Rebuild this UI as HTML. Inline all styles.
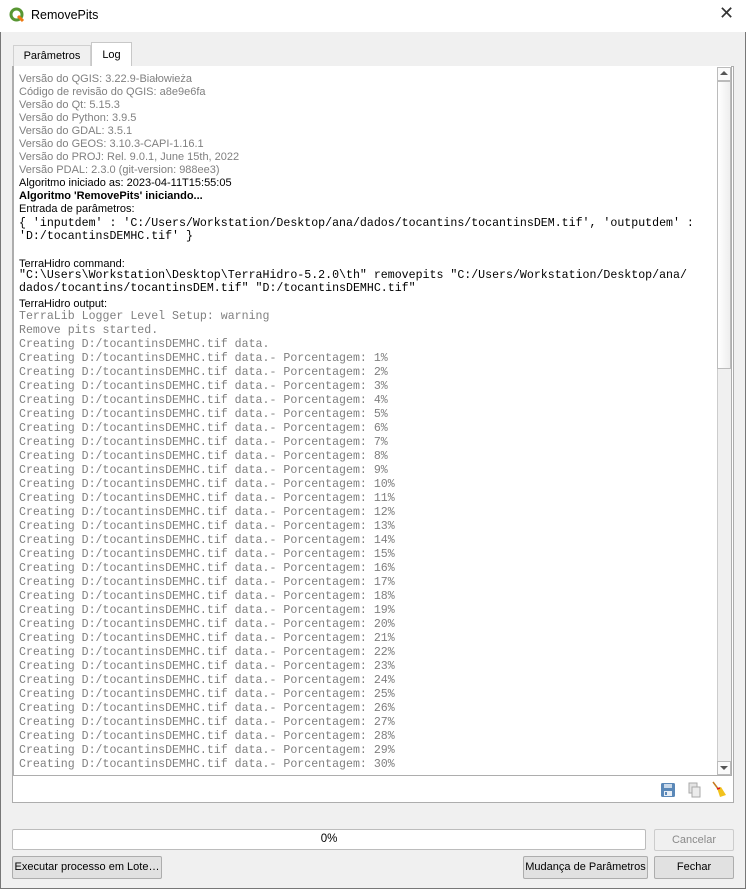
<!DOCTYPE html>
<html style="width:746px;height:889px;overflow:hidden"><head><meta charset="utf-8"><style>
*{margin:0;padding:0;box-sizing:border-box}
body{width:746px;height:889px;background:#f0f0f0;position:relative;overflow:hidden;font-family:"Liberation Sans",sans-serif;font-size:11px;color:#000}
.a{position:absolute}
.l{position:absolute;left:19px;height:14px;line-height:14px;white-space:pre}
.g{color:#808080}
.m{font-family:"Liberation Mono",monospace;font-size:11.6px}
.mg{font-family:"Liberation Mono",monospace;font-size:11.6px;color:#808080}
.btn{position:absolute;border:1px solid #adadad;background:#e1e1e1;border-radius:2px;text-align:center;line-height:21px;font-size:11px;white-space:nowrap;overflow:hidden}
</style></head><body>
<div class="a" style="left:0;top:0;width:746px;height:32px;background:#fff"></div>
<svg class="a" style="left:9px;top:7px" width="16" height="16" viewBox="0 0 16 16"><circle cx="7.5" cy="7.5" r="5.5" fill="none" stroke="#589632" stroke-width="3"/><path d="M9 9 L14 14" stroke="#ee7913" stroke-width="3"/></svg>
<div class="a" style="left:31px;top:8px;font-size:12.5px">RemovePits</div>
<div class="a" style="left:719px;top:3px;font-size:18px;color:#333">✕</div>
<div class="a" style="left:0;top:32px;width:1px;height:857px;background:#777"></div>
<div class="a" style="left:745px;top:32px;width:1px;height:857px;background:#777"></div>
<div class="a" style="left:0;top:888px;width:746px;height:1px;background:#777"></div>
<!-- tabs -->
<div class="a" style="left:13px;top:45px;width:78px;height:21px;border:1px solid #d0d0d0;border-bottom:none;background:#f0f0f0;text-align:center;line-height:21px">Parâmetros</div>
<div class="a" style="left:91px;top:42px;width:41px;height:25px;border:1px solid #c8c8c8;border-bottom:none;background:#fff;text-align:center;line-height:25px">Log</div>
<div class="a" style="left:12px;top:66px;width:722px;height:737px;border:1px solid #adadad;background:#fff"></div>
<div class="a" style="left:13px;top:66px;width:719px;height:710px;border:1px solid #adadad;border-top:none;background:#fff"></div>
<!-- scrollbar -->
<div class="a" style="left:717px;top:67px;width:14px;height:708px;background:#f0f0f0;border-left:1px solid #ccc"></div>
<div class="a" style="left:717px;top:67px;width:14px;height:14px;border:1px solid #bbb;background:#fafafa"></div>
<div class="a" style="left:720px;top:71px;width:0;height:0;border-left:4px solid transparent;border-right:4px solid transparent;border-bottom:4px solid #555"></div>
<div class="a" style="left:717px;top:81px;width:14px;height:288px;border:1px solid #bbb;background:linear-gradient(90deg,#fff,#eee)"></div>
<div class="a" style="left:717px;top:761px;width:14px;height:14px;border:1px solid #bbb;background:#fafafa"></div>
<div class="a" style="left:720px;top:766px;width:0;height:0;border-left:4px solid transparent;border-right:4px solid transparent;border-top:4px solid #555"></div>
<!-- log -->
<div class="l g" style="top:72px">Versão do QGIS: 3.22.9-Białowieża</div>
<div class="l g" style="top:85px">Código de revisão do QGIS: a8e9e6fa</div>
<div class="l g" style="top:98px">Versão do Qt: 5.15.3</div>
<div class="l g" style="top:111px">Versão do Python: 3.9.5</div>
<div class="l g" style="top:124px">Versão do GDAL: 3.5.1</div>
<div class="l g" style="top:137px">Versão do GEOS: 3.10.3-CAPI-1.16.1</div>
<div class="l g" style="top:150px">Versão do PROJ: Rel. 9.0.1, June 15th, 2022</div>
<div class="l g" style="top:163px">Versão PDAL: 2.3.0 (git-version: 988ee3)</div>
<div class="l" style="top:176px">Algoritmo iniciado as: 2023-04-11T15:55:05</div>
<div class="l" style="top:189px;font-weight:bold">Algoritmo 'RemovePits' iniciando...</div>
<div class="l" style="top:202px">Entrada de parâmetros:</div>
<div class="l m" style="top:217px">{ 'inputdem' : 'C:/Users/Workstation/Desktop/ana/dados/tocantins/tocantinsDEM.tif', 'outputdem' :</div>
<div class="l m" style="top:230px">'D:/tocantinsDEMHC.tif' }</div>
<div class="l" style="top:257px">TerraHidro command:</div>
<div class="l m" style="top:269px">"C:\Users\Workstation\Desktop\TerraHidro-5.2.0\th" removepits "C:/Users/Workstation/Desktop/ana/</div>
<div class="l m" style="top:282px">dados/tocantins/tocantinsDEM.tif" "D:/tocantinsDEMHC.tif"</div>
<div class="l" style="top:297px">TerraHidro output:</div>
<div class="l mg" style="top:310px">TerraLib Logger Level Setup: warning</div>
<div class="l mg" style="top:324px">Remove pits started.</div>
<div class="l mg" style="top:338px">Creating D:/tocantinsDEMHC.tif data.</div>
<div class="l mg" style="top:352px">Creating D:/tocantinsDEMHC.tif data.- Porcentagem: 1%
Creating D:/tocantinsDEMHC.tif data.- Porcentagem: 2%
Creating D:/tocantinsDEMHC.tif data.- Porcentagem: 3%
Creating D:/tocantinsDEMHC.tif data.- Porcentagem: 4%
Creating D:/tocantinsDEMHC.tif data.- Porcentagem: 5%
Creating D:/tocantinsDEMHC.tif data.- Porcentagem: 6%
Creating D:/tocantinsDEMHC.tif data.- Porcentagem: 7%
Creating D:/tocantinsDEMHC.tif data.- Porcentagem: 8%
Creating D:/tocantinsDEMHC.tif data.- Porcentagem: 9%
Creating D:/tocantinsDEMHC.tif data.- Porcentagem: 10%
Creating D:/tocantinsDEMHC.tif data.- Porcentagem: 11%
Creating D:/tocantinsDEMHC.tif data.- Porcentagem: 12%
Creating D:/tocantinsDEMHC.tif data.- Porcentagem: 13%
Creating D:/tocantinsDEMHC.tif data.- Porcentagem: 14%
Creating D:/tocantinsDEMHC.tif data.- Porcentagem: 15%
Creating D:/tocantinsDEMHC.tif data.- Porcentagem: 16%
Creating D:/tocantinsDEMHC.tif data.- Porcentagem: 17%
Creating D:/tocantinsDEMHC.tif data.- Porcentagem: 18%
Creating D:/tocantinsDEMHC.tif data.- Porcentagem: 19%
Creating D:/tocantinsDEMHC.tif data.- Porcentagem: 20%
Creating D:/tocantinsDEMHC.tif data.- Porcentagem: 21%
Creating D:/tocantinsDEMHC.tif data.- Porcentagem: 22%
Creating D:/tocantinsDEMHC.tif data.- Porcentagem: 23%
Creating D:/tocantinsDEMHC.tif data.- Porcentagem: 24%
Creating D:/tocantinsDEMHC.tif data.- Porcentagem: 25%
Creating D:/tocantinsDEMHC.tif data.- Porcentagem: 26%
Creating D:/tocantinsDEMHC.tif data.- Porcentagem: 27%
Creating D:/tocantinsDEMHC.tif data.- Porcentagem: 28%
Creating D:/tocantinsDEMHC.tif data.- Porcentagem: 29%
Creating D:/tocantinsDEMHC.tif data.- Porcentagem: 30%</div>
<!-- toolbar icons -->
<svg class="a" style="left:660px;top:782px" width="16" height="16" viewBox="0 0 16 16"><rect x="1" y="1" width="14" height="14" rx="1.5" fill="#5a88b8"/><rect x="4" y="2" width="8" height="4" fill="#c9d9ea"/><rect x="4" y="9" width="8" height="5" fill="#e8eef5"/><rect x="5" y="10" width="2" height="3" fill="#5a88b8"/></svg>
<svg class="a" style="left:686px;top:782px" width="16" height="16" viewBox="0 0 16 16"><rect x="3" y="1" width="8" height="10" fill="#e4e4e4" stroke="#aaa"/><rect x="6" y="5" width="8" height="10" fill="#ececec" stroke="#aaa"/></svg>
<svg class="a" style="left:711px;top:781px" width="16" height="18" viewBox="0 0 16 18"><path d="M2 1 L8 9" stroke="#c47a1e" stroke-width="1.5"/><path d="M6 7 L10 6 L15 14 L9 16 Z" fill="#f2c21d"/><path d="M6 8 L9 7" stroke="#d12" stroke-width="1.5"/></svg>
<!-- progress -->
<div class="a" style="left:12px;top:829px;width:634px;height:21px;border:1px solid #bcbcbc;background:#fff;border-radius:2px;text-align:center;line-height:19px;font-size:11.5px">0%</div>
<div class="btn" style="left:654px;top:829px;width:80px;height:22px;color:#8a8a8a;background:#f0f0f0;border-color:#ccc">Cancelar</div>
<div class="btn" style="left:12px;top:856px;width:150px;height:23px">Executar processo em Lote…</div>
<div class="btn" style="left:523px;top:856px;width:125px;height:23px">Mudança de Parâmetros</div>
<div class="btn" style="left:654px;top:856px;width:80px;height:23px">Fechar</div>
</body></html>
